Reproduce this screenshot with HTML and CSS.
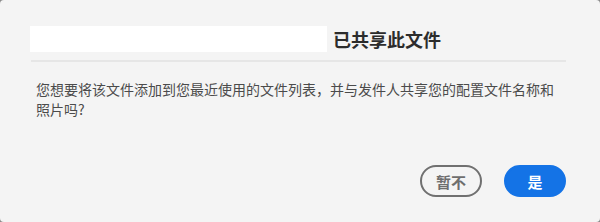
FILE: index.html
```html
<!DOCTYPE html>
<html lang="zh-CN">
<head>
    <meta charset="UTF-8">
    <title>已共享此文件</title>
    <link rel="stylesheet" href="styles.css">
</head>
<body>
    <div class="dialog">
        <div class="header">
            <div class="sender"></div>
            <h2 class="title">已共享此文件</h2>
        </div>
        <div class="divider"></div>
        <p class="message">您想要将该文件添加到您最近使用的文件列表，并与发件人共享您的配置文件名称和照片吗?</p>
        <div class="actions">
            <button class="btn btn-secondary">暂不</button>
            <button class="btn btn-primary">是</button>
        </div>
    </div>
</body>
</html>
```

FILE: styles.css
```css
* {
    box-sizing: border-box;
    margin: 0;
    padding: 0;
}
html, body {
    height: 100%;
}
body {
    background: #8a8a8a;
    font-family: "Noto Sans CJK SC", "Noto Sans", sans-serif;
}
.dialog {
    height: 100%;
    background: #f4f4f4;
    border-radius: 4px;
    padding: 26px 34px 0 30px;
}
.header {
    display: flex;
    align-items: center;
    gap: 6px;
}
.sender {
    width: 297px;
    height: 26px;
    background: #ffffff;
}
.title {
    font-size: 18px;
    line-height: 26px;
    font-weight: bold;
    color: #2c2c2c;
}
.divider {
    height: 2px;
    margin: 8px 0 0 1px;
    background: #e6e6e6;
}
.message {
    margin-top: 17px;
    padding-left: 6px;
    font-size: 14px;
    line-height: 20px;
    color: #4b4b4b;
}
.actions {
    display: flex;
    justify-content: flex-end;
    gap: 22px;
    margin-top: 46px;
}
.btn {
    width: 62px;
    height: 32px;
    border-radius: 16px;
    font-family: inherit;
    font-size: 15px;
    font-weight: bold;
    line-height: 1;
}
.btn-secondary {
    background: transparent;
    border: 2px solid #707070;
    color: #6e6e6e;
}
.btn-primary {
    background: #1473e6;
    border: 2px solid #1473e6;
    color: #ffffff;
}
```
